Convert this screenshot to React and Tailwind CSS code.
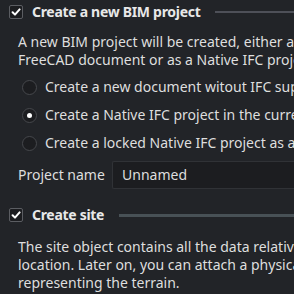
export default function App() {
  const Check = () => (
    <div className="w-[14px] h-[14px] rounded-[2px] border border-[#5b5d62] bg-[#1c1d20] flex items-center justify-center shrink-0">
      <svg width="10" height="10" viewBox="0 0 10 10">
        <path d="M1.6 5.2 L4 7.6 L8.6 2.4" fill="none" stroke="#ffffff" strokeWidth="2" strokeLinecap="round" strokeLinejoin="round" />
      </svg>
    </div>
  );
  const Radio = ({ on }) => (
    <div className="w-[15px] h-[15px] rounded-full border border-[#46484c] bg-[#1c1d20] flex items-center justify-center shrink-0">
      {on && <div className="w-[5px] h-[5px] rounded-full bg-white" />}
    </div>
  );
  return (
    <div
      className="w-[294px] h-[294px] overflow-hidden bg-[#222428] text-[#dedede] text-[14px] leading-[18px] whitespace-nowrap"
      style={{ fontFamily: '"Noto Sans", sans-serif' }}
    >
      <div className="h-[24px] flex items-center pl-[9px]">
        <Check />
        <span className="ml-[9px] font-bold tracking-[-0.3px] text-[#e8e8e8]">Create a new BIM project</span>
        <div className="flex-1 h-[2px] bg-[#4e5058] ml-[15px]" />
      </div>
      <div className="pl-[18px] mt-[9px]">
        <div>A new BIM project will be created, either as a</div>
        <div>FreeCAD document or as a Native IFC project</div>
      </div>
      <div className="mt-[4px] pl-[22px]">
        <div className="h-[28px] flex items-center">
          <Radio />
          <span className="ml-[8px]">Create a new document witout IFC support</span>
        </div>
        <div className="h-[28px] flex items-center">
          <Radio on />
          <span className="ml-[8px]">Create a Native IFC project in the current document</span>
        </div>
        <div className="h-[28px] flex items-center">
          <Radio />
          <span className="ml-[8px]">Create a locked Native IFC project as a new document</span>
        </div>
      </div>
      <div className="mt-[4px] pl-[18px] flex items-center">
        <span className="w-[94px]">Project name</span>
        <div className="flex-1 h-[28px] bg-[#1c1d20] border border-[#303236] border-r-0 rounded-l-[2px] flex items-center pl-[9px]">
          Unnamed
        </div>
      </div>
      <div className="h-[24px] flex items-center pl-[9px] mt-[14px]">
        <Check />
        <span className="ml-[9px] font-bold tracking-[-0.3px] text-[#e8e8e8]">Create site</span>
        <div className="flex-1 h-[3px] bg-[#485156] ml-[15px]" />
      </div>
      <div className="pl-[18px] mt-[11px]">
        <div>The site object contains all the data relative to the</div>
        <div>location. Later on, you can attach a physical object</div>
        <div>representing the terrain.</div>
      </div>
    </div>
  );
}
